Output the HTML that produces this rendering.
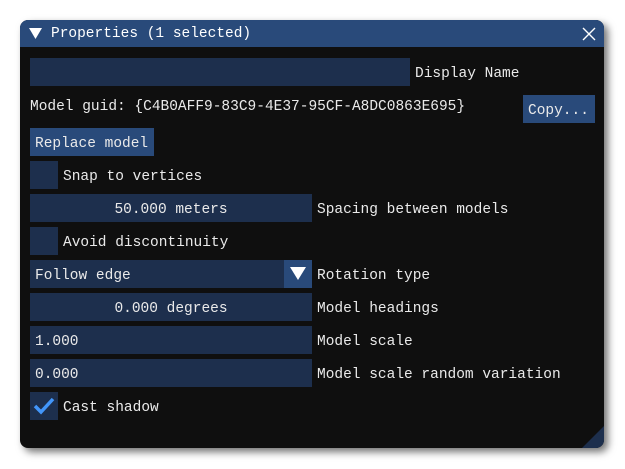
<!DOCTYPE html>
<html><head><style>
body{margin:0;width:625px;height:469px;background:#fff;position:relative;overflow:hidden;font-family:"Liberation Mono",monospace;font-size:14.5px;color:#eaeaea}
.win{position:absolute;left:20px;top:20px;width:584px;height:428px;background:#0f0f0f;border-radius:8px;box-shadow:4px 4px 8px rgba(0,0,0,.55);overflow:hidden}
.title{position:absolute;left:0;top:0;width:584px;height:27px;background:#294a7a}
.a{position:absolute;white-space:pre;line-height:28px;padding-top:2px;font-weight:500}
.f{position:absolute;background:#1d2f4d;height:28px}
.b{position:absolute;background:#294a7a;height:28px}
</style></head><body>
<div class="win">
<div class="title"></div>
<svg style="position:absolute;left:9px;top:8px" width="13" height="12"><path d="M0 0H13L6.5 11Z" fill="#fff"/></svg>
<div class="a" style="left:31px;top:0;line-height:27px;padding-top:1px;color:#fff">Properties (1 selected)</div>
<svg style="position:absolute;left:562px;top:7px" width="14" height="14"><path d="M1 1L13 13M13 1L1 13" stroke="#fff" stroke-width="1.4"/></svg>
<svg style="position:absolute;left:562px;top:406px" width="22" height="22"><path d="M22 0L22 22L0 22Z" fill="#1d2f4d"/></svg>
</div>
<div class="f" style="left:30px;top:58px;width:380px"></div>
<div class="a" style="left:415px;top:58px">Display Name</div>
<div class="a" style="left:30px;top:91px">Model guid: {C4B0AFF9-83C9-4E37-95CF-A8DC0863E695}</div>
<div class="b" style="left:523px;top:95px;width:72px"></div>
<div class="a" style="left:528px;top:95px">Copy...</div>
<div class="b" style="left:30px;top:128px;width:124px"></div>
<div class="a" style="left:35px;top:128px">Replace model</div>
<div class="f" style="left:30px;top:161px;width:28px"></div>
<div class="a" style="left:63px;top:161px">Snap to vertices</div>
<div class="f" style="left:30px;top:194px;width:282px"></div>
<div class="a" style="left:30px;top:194px;width:282px;text-align:center">50.000 meters</div>
<div class="a" style="left:317px;top:194px">Spacing between models</div>
<div class="f" style="left:30px;top:227px;width:28px"></div>
<div class="a" style="left:63px;top:227px">Avoid discontinuity</div>
<div class="f" style="left:30px;top:260px;width:282px"></div>
<div class="b" style="left:284px;top:260px;width:28px"></div>
<svg style="position:absolute;left:290px;top:267px" width="16" height="14"><path d="M0 0H16L8 13Z" fill="#fff"/></svg>
<div class="a" style="left:35px;top:260px">Follow edge</div>
<div class="a" style="left:317px;top:260px">Rotation type</div>
<div class="f" style="left:30px;top:293px;width:282px"></div>
<div class="a" style="left:30px;top:293px;width:282px;text-align:center">0.000 degrees</div>
<div class="a" style="left:317px;top:293px">Model headings</div>
<div class="f" style="left:30px;top:326px;width:282px"></div>
<div class="a" style="left:35px;top:326px">1.000</div>
<div class="a" style="left:317px;top:326px">Model scale</div>
<div class="f" style="left:30px;top:359px;width:282px"></div>
<div class="a" style="left:35px;top:359px">0.000</div>
<div class="a" style="left:317px;top:359px">Model scale random variation</div>
<div class="f" style="left:30px;top:392px;width:28px"></div>
<svg style="position:absolute;left:30px;top:392px" width="28" height="28"><path d="M5 14L11 20L23 7" stroke="#4296fa" stroke-width="3.5" fill="none"/></svg>
<div class="a" style="left:63px;top:392px">Cast shadow</div>
</body></html>
